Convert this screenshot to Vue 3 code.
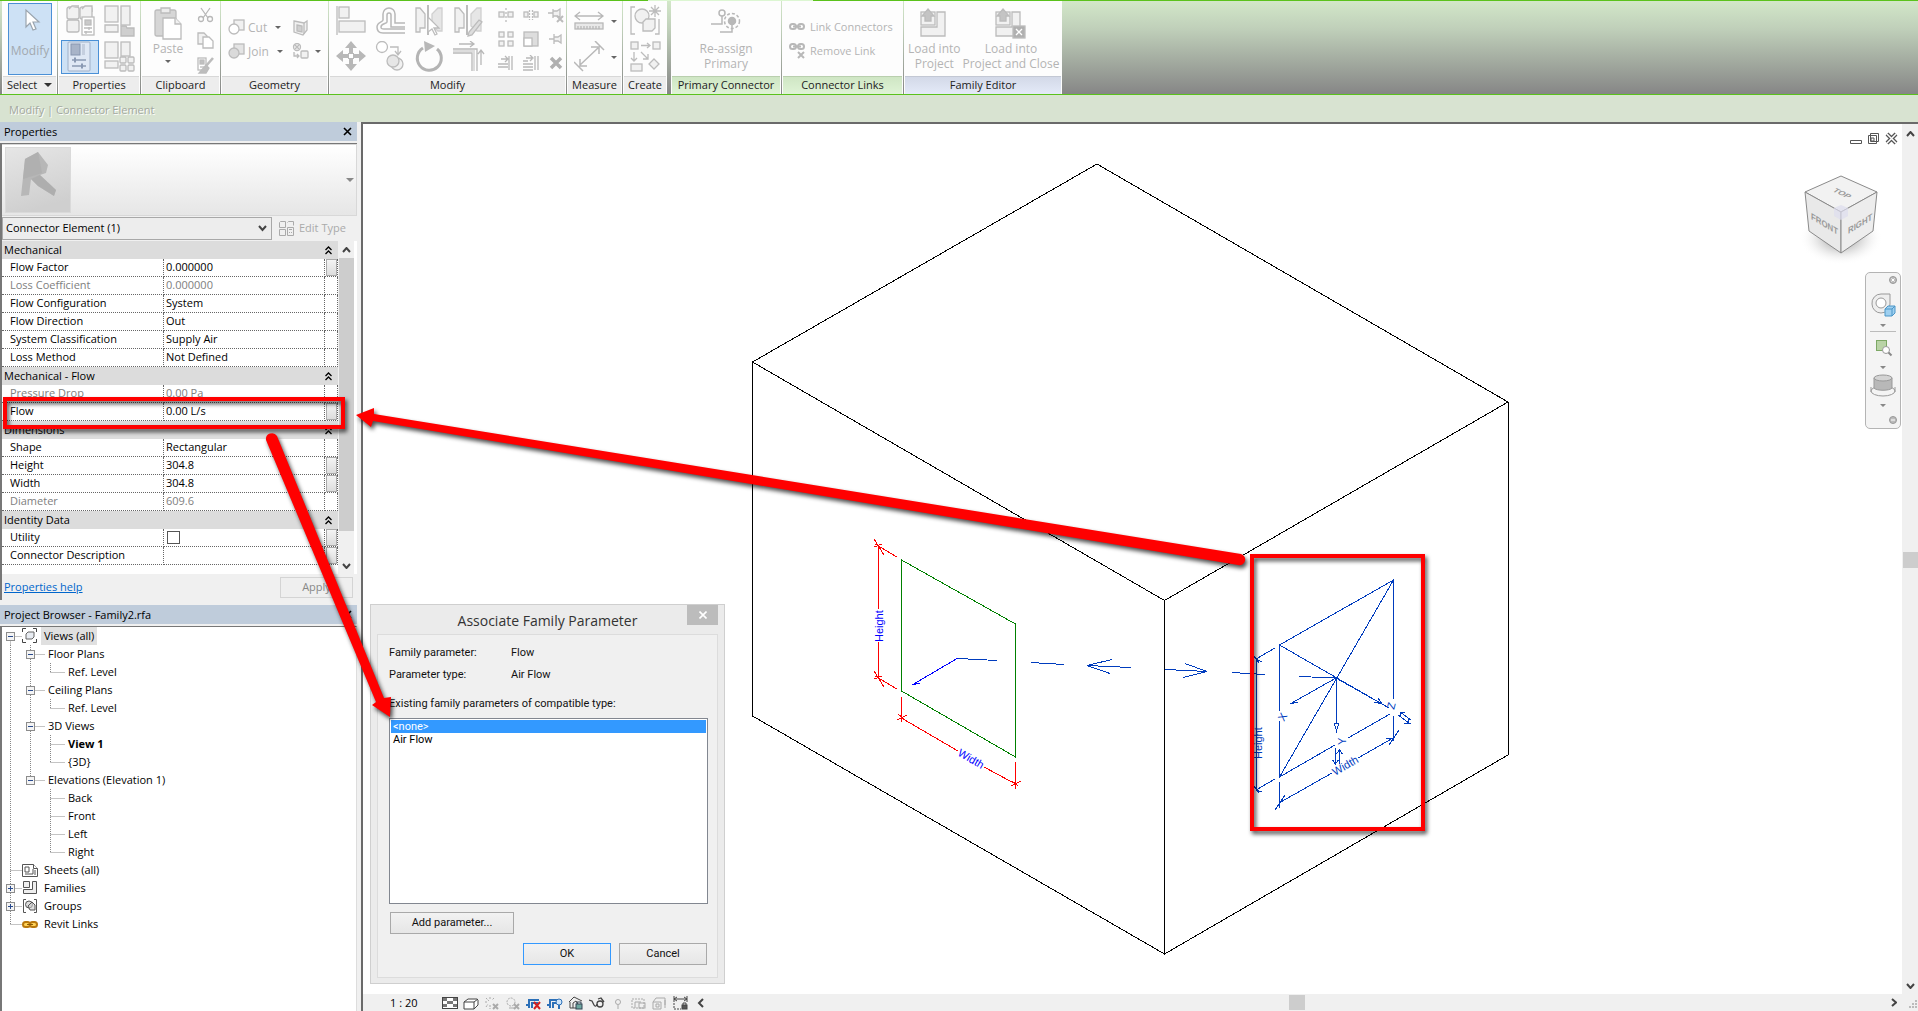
<script setup>
import { ref } from 'vue'

const G = 'fill="#f1f1f1" stroke="#bcbcbc" stroke-width="1.3"'
const L = 'fill="none" stroke="#b8b8b8" stroke-width="1.3"'
const D = 'fill="#b8b8b8"'

const icons = {
  cursor: `<path d="M9 3v17l4-4 3 7 3-1-3-7h6z" fill="#fff" stroke="#9aa4ae" stroke-width="1.2"/>`,
  typeProps: `<g ${G}><rect x="3" y="2" width="12" height="12" rx="2"/><rect x="16" y="2" width="12" height="12" rx="2"/><rect x="3" y="15" width="12" height="12" rx="2"/><path d="M5 4l3-3h7M18 4l3-3h7v6"/><rect x="18" y="12" width="12" height="18" fill="#fff"/><rect x="21" y="15" width="6" height="5" fill="#c9c9c9"/><path d="M20 23h8M20 27h8M25 22v3M22 26v3"/></g>`,
  family: `<g ${G}><rect x="2" y="1" width="13" height="16"/><rect x="18" y="1" width="9" height="19"/><path d="M2 20h13v7H2z"/><path d="M18 21h5l1 2h7v8H18z" fill="#cfcfcf"/></g>`,
  props: `<rect x="4" y="1" width="22" height="29" rx="1" fill="#dfe8f5" stroke="#9fb0c8"/><rect x="7" y="3" width="9" height="11" fill="#a8b4c8" stroke="#8796b0"/><rect x="18" y="3" width="3" height="11" fill="#c5cfdf"/><path d="M8 19h14M8 25h14" stroke="#8a99b3" stroke-width="1.5"/><path d="M11 16.500v5M18 22.500v5" stroke="#8a99b3" stroke-width="2"/>`,
  types: `<g ${G}><rect x="2" y="1" width="13" height="16"/><rect x="18" y="1" width="9" height="14"/><rect x="2" y="20" width="13" height="7"/><rect x="17" y="16" width="6" height="6" rx="1"/><rect x="25" y="16" width="6" height="6" rx="1"/><rect x="17" y="24" width="6" height="6" rx="1"/><rect x="25" y="24" width="6" height="6" rx="1"/></g>`,
  paste: `<g ${G}><rect x="3" y="4" width="21" height="26" rx="2" fill="#d6d6d6"/><path d="M9 2h9v5H9z" fill="#ececec"/><path d="M11 12h12l6 6v15H11z" fill="#fff"/><path d="M23 12v6h6"/></g>`,
  cut: `<g ${L}><path d="M4 1l7 10M13 1L6 11"/><circle cx="4" cy="12" r="2.500"/><circle cx="13" cy="12" r="2.500"/></g>`,
  copy: `<g ${G}><path d="M1 1h6l3 3v8H1z"/><path d="M6 5h6l4 4v7H6z" fill="#fff"/></g>`,
  match: `<g ${G}><rect x="1" y="1" width="8" height="12" fill="#fff"/><rect x="3" y="3" width="4" height="4" fill="#c0c0c0"/><path d="M3 10h4"/><path d="M16 1L9 9" stroke-width="2.500"/><path d="M9 8l3 3-3 5H2z" fill="#bdbdbd"/></g>`,
  cutGeo: `<g ${G}><rect x="6" y="1" width="10" height="10"/><circle cx="6" cy="10" r="5" fill="#fff"/></g>`,
  joinGeo: `<g ${G}><rect x="6" y="1" width="10" height="10" fill="#e4e4e4"/><circle cx="6" cy="10" r="5" fill="#dadada"/></g>`,
  wall: `<g ${G}><path d="M2 2l10 2 3-2v9l-4 5-9-3z"/><path d="M5 6l5 1v6l-5-1z" fill="#d0d0d0"/><path d="M12 4v11"/></g>`,
  demolish: `<g ${G}><circle cx="5" cy="4" r="3.500"/><path d="M3 2l4 4M7 2L3 6"/><rect x="9" y="8" width="7" height="7" rx="1"/><path d="M2 9v4h5M5 11l2 2-2 2"/></g>`,
  align: `<g ${G}><path d="M1 1v29"/><rect x="3" y="2" width="10" height="11"/><rect x="3" y="16" width="26" height="11"/></g>`,
  offset: `<g fill="none" stroke="#b8b8b8" stroke-width="1.5"><path d="M30 18H20V9a6 6 0 0 0-12 0v6c0 2-6 2-6 7s3 6 6 6h22"/><path d="M30 22H16V10a2 2 0 0 0-4 0v7c0 2-6 1-6 5 0 2 1 2 3 2h21"/></g>`,
  mirrorPick: `<g ${G}><path d="M14 0v30" stroke-width="2"/><path d="M2 3h4l5 6v14l-5 0v4H2z"/><path d="M28 3h-4l-6 6v12l6 5h4z" fill="#e6e6e6" stroke="#d0d0d0"/><path d="M14 12v15l4-3 3 6 2-1-3-6h5z" fill="#fff"/></g>`,
  mirrorDraw: `<g ${G}><path d="M14 0v30" stroke-width="2"/><path d="M2 3h4l5 6v14l-5 0v4H2z"/><path d="M28 3h-4l-6 6v12l6 5h4z" fill="#e6e6e6" stroke="#d0d0d0"/><path d="M26 15l3 2-10 13-4 1 1-4z" fill="#ddd"/></g>`,
  move: `<g ${D}><path d="M15 0l6 7h-4v5h-4V7H9zM15 30l6-7h-4v-5h-4v5H9zM0 15l7-6v4h5v4H7v4zM30 15l-7-6v4h-5v4h5v4z"/><rect x="12.500" y="12.500" width="5" height="5" fill="#fff" stroke="#b8b8b8"/></g>`,
  copyTool: `<g ${G}><circle cx="7" cy="6" r="5.500" fill="#fff"/><path d="M15 6h8v7M20 10l3 4 3-4" fill="none"/><circle cx="22" cy="23" r="6"/><circle cx="18" cy="20" r="6" fill="#e6e6e6"/></g>`,
  rotate: `<path d="M9 7a12 12 0 1 0 14 1" fill="none" stroke="#b4b4b4" stroke-width="3"/><path d="M10 0l11 5-10 6z" ${D}/>`,
  trim: `<g ${L}><path d="M6 3h14M17 0l4 3-4 3M0 8h24v22M0 12h19v18M28 24V10M25 13l3-4 3 4"/><path d="M0 10h21v20" stroke="#ddd" stroke-width="2"/></g>`,
  split: `<g ${G}><rect x="1" y="5" width="5" height="5"/><rect x="10" y="5" width="5" height="5"/><path d="M8 1v14" stroke-dasharray="2 2"/></g>`,
  splitGap: `<g ${G}><rect x="1" y="5" width="4" height="5"/><rect x="11" y="5" width="4" height="5"/><path d="M6.500 3v10M9.500 3v10" stroke-dasharray="2 1"/></g>`,
  unpin: `<g ${G}><path d="M0 6h5M5 2v9M5 4h4l3-2v8L9 9H5"/><path d="M9 9l6 6M15 9l-6 6" stroke-width="2"/></g>`,
  array: `<g ${G}><rect x="1" y="1" width="5" height="5"/><rect x="10" y="1" width="5" height="5"/><rect x="1" y="10" width="5" height="5"/><rect x="10" y="10" width="5" height="5"/></g>`,
  scale: `<g ${G}><rect x="1" y="1" width="14" height="14" fill="#ddd"/><rect x="1" y="7" width="8" height="8" fill="#fff"/></g>`,
  pin: `<g ${G}><path d="M1 8h5M6 3v10M6 6h4l3-2v8l-3-2H6"/></g>`,
  trimOne: `<g ${L}><path d="M3 4h6M7 1l3 3-3 3M0 9h10M0 12h10M11 1v14M14 1v14"/></g>`,
  trimMany: `<g ${L}><path d="M3 3h6M7 0l3 3-3 3M0 6h5M0 9h10M0 12h10M0 15h10M12 1v14M15 1v14"/></g>`,
  del: `<path d="M3 3l10 10M13 3L3 13" stroke="#b0b0b0" stroke-width="3.500"/>`,
  measure: `<g ${L}><path d="M1 6h28M6 2L1 6l5 4M24 2l5 4-5 4"/><rect x="1" y="13" width="28" height="6" fill="#e8e8e8"/><path d="M4 16v3M7 16v3M10 16v3M13 16v3M16 16v3M19 16v3M22 16v3M25 16v3"/></g>`,
  dimension: `<g fill="none" stroke="#b8b8b8" stroke-width="1.5"><path d="M6 24L24 7M6 18v7h7M17 6h8v7M21 0l9 9M0 21l9 9"/></g>`,
  group: `<g ${G}><path d="M5 2H1v27h4M25 29h4V14" fill="none"/><circle cx="12" cy="11" r="7"/><path d="M13 17l3-3h9v9l-3 3h-9z"/><path d="M25 0v12M19 6h12M21 2l8 8M29 2l-8 8"/></g>`,
  similar: `<g ${G}><rect x="1" y="1" width="7" height="7"/><rect x="23" y="1" width="7" height="7"/><path d="M11 4.500h9M17 2l3 2.500-3 2.500M4 11v8M1 17l3 3 3-3M11 11l7 7M18 13v5h-5" fill="none"/><rect x="1" y="23" width="11" height="7"/><path d="M24 18l5 5-5 5-5-5z"/></g>`,
  reassign: `<g fill="none" stroke="#b8b8b8" stroke-width="1.5"><circle cx="12" cy="4" r="3"/><path d="M12 7v8H1M22 13v10H10"/><circle cx="22" cy="12" r="7.500" stroke-dasharray="3 2"/><circle cx="22" cy="12" r="3.500" fill="#b8b8b8"/></g>`,
  link: `<g fill="none" stroke="#b8b8b8" stroke-width="2"><rect x="1" y="5" width="6" height="5" rx="2.500"/><rect x="9" y="5" width="6" height="5" rx="2.500"/><path d="M4 7.500h8"/></g>`,
  unlink: `<g fill="none" stroke="#b8b8b8" stroke-width="2"><rect x="1" y="1" width="6" height="5" rx="2.500"/><rect x="9" y="1" width="6" height="5" rx="2.500"/><path d="M4 3.500h8M9 9l6 6M15 9l-6 6"/></g>`,
  load: `<g ${G}><path d="M17 3h8v24H1V18h16z"/><rect x="1" y="3" width="14" height="13"/><path d="M8 0l6 7h-3v5H5V7H2z" fill="#c4c4c4"/></g>`,
  loadClose: `<g ${G}><path d="M17 3h8v24H1V18h16z"/><rect x="1" y="3" width="14" height="13"/><path d="M8 0l6 7h-3v5H5V7H2z" fill="#c4c4c4"/><rect x="18" y="17" width="12" height="12" fill="#b0b0b0"/><path d="M21 20l6 6M27 20l-6 6" stroke="#fff"/></g>`,
  views: `<g fill="none" stroke="#444"><path d="M4 .5H.5V4M11 .5h3.500V4M4 14.500H.5V11M11 14.500h3.500V11"/><path d="M4 6l2-2h6v5l-2 2H4z" fill="#e8ecf2" stroke="#666"/></g>`,
  sheets: `<g fill="#fff" stroke="#555"><path d="M.5 2.500h11l4 4v8H.5z"/><path d="M11.500 2.500v4h4" /><path d="M3 5h4v5H3zM3 12h8V7M13 8v5" fill="none"/></g>`,
  families: `<g fill="#eee" stroke="#555"><path d="M1.500 1.500h6v6h-6zM10.500 1.500h4v12h-13v-4h9z"/></g>`,
  groups: `<g fill="none" stroke="#555"><path d="M4 1.500H1.500v13H4M12 1.500h2.500v13H12"/><circle cx="7" cy="6.500" r="3.500" fill="#ddd"/><path d="M6 8l4-4 3 3v5H8z" fill="#ccc" fill-opacity=".6"/></g>`,
  revitLinks: `<g fill="none" stroke="#b9780c" stroke-width="2"><rect x="1" y="6" width="7" height="5" rx="2.500" fill="#ffd35a"/><rect x="8" y="6" width="7" height="5" rx="2.500" fill="#ffd35a"/><path d="M5 8.500h6" stroke="#8a5a08" stroke-width="1"/></g>`
}

const dark = 'fill="none" stroke="#444"'
const faint = 'fill="none" stroke="#aaa"'
const viewIcons = [
  ['Detail level', `<rect x=".5" y="1.500" width="15" height="11" fill="#fff" stroke="#444"/><path d="M1 2h4v3H1zM11 2h4v3h-4zM5 5h6v3H5zM1 8h4v3H1zM11 8h4v3h-4z" fill="#777"/>`],
  ['Visual style', `<path d="M1 6l4-3h9l1 1v5l-4 4H1zM1 6h10v7M11 6l4-3" fill="#fff" stroke="#444"/>`],
  ['Sun path', `<g ${faint}><path d="M6 1v3M1 6h3M2 2l3 3M10 2L8 4M2 11l2-3M6 9v4" stroke-dasharray="2 1"/><path d="M9 8l5 5M14 8l-5 5" stroke-width="2"/></g>`],
  ['Shadows', `<g ${faint}><circle cx="6" cy="6" r="4" stroke-dasharray="2 1"/><path d="M4 12h5"/><path d="M9 8l5 5M14 8l-5 5" stroke-width="2"/></g>`],
  ['Crop view', `<path d="M0 9h3V4h10M3 9v3M6 12V7h6" fill="none" stroke="#2c70b8" stroke-width="2"/><path d="M8 6l6 7M14 6l-6 7" stroke="#d42020" stroke-width="2"/>`],
  ['Show crop region', `<path d="M0 9h3V4h8M3 9v3M6 12V7h3" fill="none" stroke="#2c70b8" stroke-width="2"/><circle cx="12" cy="6" r="3" fill="#cfe6fb" stroke="#2c70b8"/><path d="M12 9v4" stroke="#2c70b8" stroke-width="2"/>`],
  ['Lock 3D view', `<path d="M1 6l5-5 8 4M2 6v6h6M5 12V7l3-2 2 3" ${dark}/><rect x="8" y="8" width="6" height="5" fill="#6fa8a0" stroke="#345"/><path d="M9 8V6h4v2" fill="none" stroke="#345"/>`],
  ['Temporary hide', `<g fill="none" stroke="#444" stroke-width="1.3"><path d="M0 4l3 1 2 4c1 2 3 1 3-1M9 3l3-1 3 4"/><circle cx="11" cy="8" r="3"/></g>`],
  ['Reveal hidden', `<g ${faint}><circle cx="8" cy="6" r="2.500"/><path d="M8 9v4"/></g>`],
  ['Worksharing', `<g ${faint}><path d="M1 3h12v9H1z" stroke-dasharray="2 1"/><path d="M4 12V6h6"/><rect x="8" y="7" width="6" height="5"/></g>`],
  ['Analytical model', `<g ${faint}><path d="M1 6l3-4h9v7M1 6h8v7H1zM4 8h3v3H4zM13 4v8"/></g>`],
  ['Reveal constraints', `<g ${dark}><path d="M1 0v6M14 0v6M1 3h13M4 1L1 3l3 2M11 1l3 2-3 2"/><path d="M1 7v6h7" stroke-dasharray="2 1"/><rect x="9" y="9" width="5" height="4" fill="#555"/><path d="M10 9V7h3v2"/></g>`],
  ['Collapse', `<path d="M9 3L5 7l4 4" fill="none" stroke="#444" stroke-width="2"/>`]
]

const groups = [
  { name: 'Mechanical', rows: [
    ['Flow Factor', '0.000000', { btn: true }],
    ['Loss Coefficient', '0.000000', { off: true }],
    ['Flow Configuration', 'System', {}],
    ['Flow Direction', 'Out', {}],
    ['System Classification', 'Supply Air', {}],
    ['Loss Method', 'Not Defined', {}]
  ] },
  { name: 'Mechanical - Flow', rows: [
    ['Pressure Drop', '0.00 Pa', { off: true }],
    ['Flow', '0.00 L/s', { btn: true }]
  ] },
  { name: 'Dimensions', rows: [
    ['Shape', 'Rectangular', {}],
    ['Height', '304.8', { btn: true }],
    ['Width', '304.8', { btn: true }],
    ['Diameter', '609.6', { off: true }]
  ] },
  { name: 'Identity Data', rows: [
    ['Utility', '', { btn: true, check: true }],
    ['Connector Description', '', { btn: true }]
  ] }
]

const tree = [
  { l: 0, t: 'Views (all)', box: '-', icon: 'views', sel: true },
  { l: 1, t: 'Floor Plans', box: '-' },
  { l: 2, t: 'Ref. Level', end: true },
  { l: 1, t: 'Ceiling Plans', box: '-' },
  { l: 2, t: 'Ref. Level', end: true },
  { l: 1, t: '3D Views', box: '-' },
  { l: 2, t: 'View 1', bold: true },
  { l: 2, t: '{3D}', end: true },
  { l: 1, t: 'Elevations (Elevation 1)', box: '-', end: true },
  { l: 2, t: 'Back' },
  { l: 2, t: 'Front' },
  { l: 2, t: 'Left' },
  { l: 2, t: 'Right', end: true },
  { l: 0, t: 'Sheets (all)', icon: 'sheets' },
  { l: 0, t: 'Families', box: '+', icon: 'families' },
  { l: 0, t: 'Groups', box: '+', icon: 'groups' },
  { l: 0, t: 'Revit Links', icon: 'revitLinks', end: true }
]
const lastBranch = tree.findIndex(r => r.l === 1 && r.end)
const guideWidth = [20, 43, 63]

function guides(row, i) {
  const v = (x, a, b) => `M${x} ${a}V${b}`
  const y = 9.5
  let d = v(8.5, i === 0 ? y : 0, row.l === 0 && row.end ? y : 18)
  if (i > 0 && i <= lastBranch) d += v(28.5, 0, i === lastBranch ? y : 18)
  if (row.l === 2) d += v(48.5, 0, row.end ? y : 18)
  return d + `M${8.5 + row.l * 20} ${y}H${[20, 43, 63][row.l]}`
}

const utility = ref(false)
const chosen = ref('none')
</script>

<template>
  <div class="app">
    <header class="ribbon">
      <section class="panel p-select">
        <div class="body">
          <button class="tool big on"><svg width="30" height="38" viewBox="-2 0 30 34" v-html="icons.cursor" />Modify</button>
        </div>
        <h2>Select <i class="tri dark" /></h2>
      </section>
      <section class="panel p-props">
        <div class="body quad">
          <button v-for="n in ['typeProps', 'family', 'props', 'types']" :key="n" class="tool" :class="{ on: n === 'props' }" :aria-label="n"><svg width="32" height="32" v-html="icons[n]" /></button>
        </div>
        <h2>Properties</h2>
      </section>
      <section class="panel p-clip">
        <div class="body clip">
          <button class="tool big"><svg width="32" height="38" viewBox="0 -3 32 38" v-html="icons.paste" />Paste<i class="tri" /></button>
          <div class="stack">
            <button v-for="n in ['cut', 'copy', 'match']" :key="n" class="tool" :aria-label="n"><svg width="17" height="17" v-html="icons[n]" /></button>
          </div>
        </div>
        <h2>Clipboard</h2>
      </section>
      <section class="panel p-geo">
        <div class="body geo">
          <div class="pair"><button class="tool"><svg width="17" height="17" v-html="icons.cutGeo" />Cut<i class="tri" /></button><button class="tool" aria-label="Wall joins"><svg width="17" height="17" v-html="icons.wall" /></button></div>
          <div class="pair"><button class="tool"><svg width="17" height="17" v-html="icons.joinGeo" />Join<i class="tri" /></button><button class="tool" aria-label="Demolish"><svg width="17" height="17" v-html="icons.demolish" /><i class="tri" /></button></div>
        </div>
        <h2>Geometry</h2>
      </section>
      <section class="panel p-mod">
        <div class="body mod">
          <div class="large">
            <button v-for="n in ['align', 'offset', 'mirrorPick', 'mirrorDraw', 'move', 'copyTool', 'rotate', 'trim']" :key="n" class="tool" :aria-label="n"><svg width="32" height="32" v-html="icons[n]" /></button>
          </div>
          <div class="small">
            <button v-for="n in ['split', 'splitGap', 'unpin', 'array', 'scale', 'pin', 'trimOne', 'trimMany', 'del']" :key="n" class="tool" :aria-label="n"><svg width="16" height="16" v-html="icons[n]" /></button>
          </div>
        </div>
        <h2>Modify</h2>
      </section>
      <section class="panel p-meas">
        <div class="body two">
          <button class="tool" aria-label="Measure"><svg width="31" height="32" viewBox="0 -5 31 32" v-html="icons.measure" /><i class="tri" /></button>
          <button class="tool" aria-label="Dimension"><svg width="31" height="32" v-html="icons.dimension" /><i class="tri" /></button>
        </div>
        <h2>Measure</h2>
      </section>
      <section class="panel p-create">
        <div class="body two">
          <button class="tool" aria-label="Create group"><svg width="31" height="32" v-html="icons.group" /></button>
          <button class="tool" aria-label="Create similar"><svg width="31" height="32" v-html="icons.similar" /></button>
        </div>
        <h2>Create</h2>
      </section>
      <section class="panel p-prim green">
        <div class="body"><button class="tool big"><svg width="32" height="38" viewBox="0 -6 32 38" v-html="icons.reassign" />Re-assign<br>Primary</button></div>
        <h2>Primary Connector</h2>
      </section>
      <section class="panel p-links green">
        <div class="body links">
          <button class="tool"><svg width="16" height="16" v-html="icons.link" />Link Connectors</button>
          <button class="tool"><svg width="16" height="16" v-html="icons.unlink" />Remove Link</button>
        </div>
        <h2>Connector Links</h2>
      </section>
      <section class="panel p-fam blue">
        <div class="body fam">
          <button class="tool big"><svg width="28" height="38" viewBox="0 -6 28 38" v-html="icons.load" />Load into<br>Project</button>
          <button class="tool big"><svg width="32" height="38" viewBox="0 -6 32 38" v-html="icons.loadClose" />Load into<br>Project and Close</button>
        </div>
        <h2>Family Editor</h2>
      </section>
    </header>

    <div class="options">Modify | Connector Element</div>

    <main class="work">
      <aside class="side">
        <section class="palette">
          <div class="caption">Properties
            <button class="x" aria-label="Close properties"><svg width="9" height="9"><path d="M1 1l7 7M8 1L1 8" stroke="#000" stroke-width="1.600" /></svg></button>
          </div>
          <div class="frame">
            <div class="type">
              <svg width="66" height="66" viewBox="0 0 66 66">
                <defs><linearGradient id="tg" x1="0" y1="0" x2="0.300" y2="1"><stop offset="0" stop-color="#e6e6e6" /><stop offset="1" stop-color="#cfcfcf" /></linearGradient></defs>
                <rect x=".5" y=".5" width="65" height="65" fill="url(#tg)" stroke="#dadada" />
                <path d="M20 12L33 5L43 18L41 26L35 28L51 43L49 49L33 39L26 32L24 48L16 49z" fill="#b7b7b7" />
                <path d="M20 12L33 5L37 26L18 32z" fill="#adadad" opacity=".7" />
                <path d="M35 28L51 43L49 49L33 39L26 32z" fill="#a8a8a8" opacity=".6" />
              </svg>
              <i class="tri" />
            </div>
            <div class="picker">
              <select aria-label="Element filter"><option>Connector Element (1)</option></select>
              <button class="edit"><svg width="17" height="17" fill="none" stroke="#aaa"><path d="M1.500 2.500l1-1h5v6h-6zM9.500 2.500l1-1h5v4M1.500 9.500h6v6h-6zM9.500 7.500h6v8h-6zM11 9.500h3M11 12.500h1M13 12.500h1" /></svg>Edit Type</button>
            </div>
            <div class="gridwrap">
              <table>
                <colgroup><col class="c1"><col><col class="c3"></colgroup>
                <tbody v-for="g in groups" :key="g.name">
                  <tr class="head"><th colspan="2" scope="rowgroup">{{ g.name }}</th><th><svg width="7" height="9" fill="none" stroke="#000" stroke-width="1.300"><path d="M.5 4l3-3 3 3M.5 8l3-3 3 3" /></svg></th></tr>
                  <tr v-for="r in g.rows" :key="r[0]" :class="{ off: r[2].off }">
                    <td>{{ r[0] }}</td>
                    <td><input v-if="r[2].check" v-model="utility" type="checkbox" aria-label="Utility"><template v-else>{{ r[1] }}</template></td>
                    <td><button v-if="r[2].btn" class="assoc" :aria-label="'Associate ' + r[0]" /></td>
                  </tr>
                </tbody>
              </table>
              <div class="vbar">
                <svg width="9" height="6"><path d="M1 5l3.500-4L8 5" fill="none" stroke="#444" stroke-width="2" /></svg>
                <div class="thumb" />
                <svg width="9" height="6"><path d="M1 1l3.500 4L8 1" fill="none" stroke="#444" stroke-width="2" /></svg>
              </div>
            </div>
            <div class="foot"><a href="#">Properties help</a><button disabled>Apply</button></div>
          </div>
        </section>
        <section class="palette browser">
          <div class="caption">Project Browser - Family2.rfa
            <button class="x" aria-label="Close browser"><svg width="9" height="9"><path d="M1 1l7 7M8 1L1 8" stroke="#000" stroke-width="1.600" /></svg></button>
          </div>
          <ul class="tree">
            <li v-for="(r, i) in tree" :key="i">
              <svg :width="guideWidth[r.l]" height="18">
                <path :d="guides(r, i)" stroke="#888" stroke-dasharray="1 1" fill="none" />
                <g v-if="r.box" :transform="`translate(${4 + r.l * 20} 5)`">
                  <rect x=".5" y=".5" width="8" height="8" fill="#f4f4f4" stroke="#8c8c8c" />
                  <path :d="r.box === '+' ? 'M2 4.500h5M4.500 2v5' : 'M2 4.500h5'" stroke="#2a4b8d" />
                </g>
              </svg>
              <svg v-if="r.icon" width="16" height="16" v-html="icons[r.icon]" />
              <span :class="{ sel: r.sel, bold: r.bold }">{{ r.t }}</span>
            </li>
          </ul>
        </section>
      </aside>

      <section class="view">
        <div class="canvas">
          <svg class="drawing" width="1539" height="871" viewBox="363 123 1539 871">
            <g shape-rendering="crispEdges" fill="none">
              <path stroke="#000" d="M1097 163L752.500 361V715L1164.500 953L1508 754V401zM752.500 361L1164.500 599.500L1508 401M1164.500 599.500V953" />
              <path stroke="#008000" d="M901.500 559L1015.500 623V756L901.500 690z" />
              <path stroke="#f00" d="M878.500 546V608M878.500 641V678M874 538l10 16M875 543l22 13M874 546l8-3M874 670l10 16M875 675l22 13M874 678l8-3M901.500 696v25M897 719l10-5M898 713l6 5M901.500 717L958 750M984 766L1015.500 783M1015.500 761v27M1011 785l10-5M1012 780l6 5" />
              <path stroke="#00f" d="M912 684L958 657M912 684l8-2" />
              <g stroke="#003cbe">
                <path d="M958 657.500L997 659.500M1031 661.500L1064 663.500M1131 666.500L1087 664.500L1112 658.500M1087 664.500L1110 672.500M1165 668.500L1207 670.500L1185 662.500M1207 670.500L1183 676.500M1232 671.500L1265 673.500M1299 675.500L1336 677" />
                <path d="M1279.500 710V644L1393.500 579V698M1393.500 715V740M1393.500 579L1279.500 776V720M1279.500 644L1389 707M1336 677L1382 703L1374 701M1382 703L1378 697M1279.500 776L1335 744M1348 737L1390 713M1279.500 781V807M1336 677L1290 703L1298 701M1336.500 677V722M1334 722h5l-2.500 8z" />
                <path d="M1256.500 658V789M1256 658L1275 647M1256 658l6 3M1254 655l5 7M1256 789L1275 778M1256 789l6 2M1254 785l5 7M1279 802L1332 772M1358 757L1393 737M1275 809l10-15M1279 802v-7M1389 744l10-15M1393 737l-7 1" />
                <path d="M1335.500 747V763l-3-4M1335.500 763l3-4M1339.500 763V749l-3 4M1339.500 749l3 4M1398 714l11 8l-5 0M1409 722l-1-4M1411 719l-11-8l5 0M1400 711l1 4" />
              </g>
            </g>
            <g class="dim">
              <text transform="translate(883 641) rotate(-90)" fill="#00f">Height</text>
              <text transform="translate(957 754) rotate(30)" fill="#00f">Width</text>
              <text transform="translate(1262 758) rotate(-90)" fill="#003cbe">Height</text>
              <text transform="translate(1335 775) rotate(-30)" fill="#003cbe">Width</text>
              <text transform="translate(1284 721) rotate(-60)" fill="#003cbe">X</text>
              <text transform="translate(1346 744) rotate(-90)" fill="#003cbe">Y</text>
              <text transform="translate(1394 709) rotate(-75)" fill="#003cbe">Z</text>
            </g>
          </svg>

          <div class="winbtns">
            <button aria-label="Minimize"><svg width="13" height="13"><path d="M1.500 8.500h11v3h-11z" fill="#fff" stroke="#555" /></svg></button>
            <button aria-label="Restore"><svg width="13" height="13"><path d="M3.500 1.500h8v8h-8zM1.500 3.500h8v8h-8z" fill="#fff" stroke="#555" /><path d="M4 6h3v3H4z" fill="none" stroke="#555" /></svg></button>
            <button aria-label="Close view"><svg width="13" height="13"><path d="M2 2l9 9M11 2l-9 9" stroke="#555" stroke-width="4" /><path d="M2 2l9 9M11 2l-9 9" stroke="#fff" stroke-width="1.500" /></svg></button>
          </div>

          <svg class="cube" width="90" height="100" viewBox="0 0 90 100">
            <defs><radialGradient id="sh"><stop offset="0" stop-color="#777" /><stop offset="1" stop-color="#fff" stop-opacity="0" /></radialGradient></defs>
            <ellipse cx="45" cy="67" rx="42" ry="27" fill="url(#sh)" />
            <g stroke="#8a8a8a" stroke-linejoin="round"><path d="M45 5L81 21L45 41L9 21z" fill="#f2f2f2" /><path d="M9 21L45 41V82L13 60z" fill="#e9e9e9" /><path d="M81 21L45 41V82L77 60z" fill="#ededed" /></g>
            <path d="M45 34l7 3v8l-7 4-7-4v-8z" fill="#dde" opacity=".7" />
            <g class="face"><text transform="matrix(.87 .42 -.7 .5 36 20)">TOP</text><text transform="matrix(.87 .52 0 1 15 48)">FRONT</text><text transform="matrix(.87 -.52 0 1 52 63)">RIGHT</text></g>
          </svg>

          <div class="navbar">
            <svg width="34" height="155" viewBox="0 0 34 155">
              <g stroke="#999" fill="#eee"><circle cx="27" cy="7" r="3.500" fill="#bbb" /><path d="M25.500 5.500l3 3M28.500 5.500l-3 3" stroke="#fff" /><circle cx="27" cy="147" r="3.500" fill="#bbb" /><path d="M25 147h4" stroke="#fff" /><path d="M6 31a9 9 0 0 1 9-10h9v10a9 9 0 0 1-18 0z" /><circle cx="15" cy="30" r="5" fill="#fff" /></g>
              <path d="M19 36l3-3h7v7l-3 3h-7z" fill="#9fd0f0" stroke="#4a96c8" /><path d="M19 36h7v7M26 36l3-3" fill="none" stroke="#4a96c8" />
              <path d="M14 51h6l-3 3zM14 93h6l-3 3zM14 131h6l-3 3z" fill="#888" />
              <path d="M4 58.500h26" stroke="#bbb" />
              <rect x="10.500" y="67.500" width="10" height="10" fill="#b9d3a6" stroke="#7da865" />
              <circle cx="20" cy="77" r="3.500" fill="#fff" stroke="#999" /><path d="M22.500 79.500l3 3" stroke="#888" stroke-width="2" />
              <ellipse cx="17" cy="118" rx="12" ry="5" fill="#f4f4f4" stroke="#999" /><path d="M5 114v5M29 114v5" stroke="#999" />
              <path d="M8 105v10c2 3 16 3 18 0v-10z" fill="#b8b8b8" stroke="#999" /><ellipse cx="17" cy="105" rx="9" ry="3" fill="#d4d4d4" stroke="#999" />
            </svg>
          </div>

          <form class="dialog" role="dialog" aria-labelledby="dt" @submit.prevent>
            <div class="dtitle"><h3 id="dt">Associate Family Parameter</h3><button type="button" class="dclose" aria-label="Close"><svg width="8" height="8"><path d="M.5.5l7 7M7.500.5l-7 7" stroke="#fff" stroke-width="1.600" /></svg></button></div>
            <div class="dbody">
              <dl><dt>Family parameter:</dt><dd>Flow</dd><dt>Parameter type:</dt><dd>Air Flow</dd></dl>
              <label for="params">Existing family parameters of compatible type:</label>
              <select id="params" v-model="chosen" size="10"><option value="none">&lt;none&gt;</option><option value="air">Air Flow</option></select>
              <button type="button" class="add">Add parameter...</button>
              <div class="actions"><button type="submit" class="ok">OK</button><button type="button">Cancel</button></div>
            </div>
          </form>
        </div>
        <div class="vscroll">
          <svg width="9" height="6"><path d="M1 5l3.500-4L8 5" fill="none" stroke="#444" stroke-width="2" /></svg>
          <div class="thumb" />
          <svg width="9" height="6"><path d="M1 1l3.500 4L8 1" fill="none" stroke="#444" stroke-width="2" /></svg>
        </div>
        <footer class="viewbar">
          <span class="scale">1 : 20</span>
          <button v-for="v in viewIcons" :key="v[0]" :aria-label="v[0]"><svg width="16" height="14" v-html="v[1]" /></button>
          <div class="hscroll"><div class="thumb" /><svg width="6" height="9"><path d="M1 1l4 3.500L1 8" fill="none" stroke="#444" stroke-width="2" /></svg></div>
          <svg class="grip" width="12" height="12" fill="#bbb"><path d="M9 3h2v2H9zM6 6h2v2H6zM9 6h2v2H9zM3 9h2v2H3zM6 9h2v2H6zM9 9h2v2H9z" /></svg>
        </footer>
      </section>
    </main>

    <svg class="marks" aria-hidden="true">
      <g fill="#f00">
        <path d="M1238 565L373 421L371 427L356 415L374 408L374 414L1241 554A5 5 0 0 1 1238 565z" />
        <path d="M266 440L376 702L372 705L390 717L391 697L384 698L277 436A6 6 0 0 0 266 440z" />
      </g>
      <g fill="none" stroke="#f00" stroke-width="4"><rect x="5" y="399" width="338" height="28" /><rect x="1252" y="556" width="171" height="273" /></g>
    </svg>
  </div>
</template>

<style>
body { margin: 0; overflow: hidden; }
</style>

<style scoped>
.app { position: relative; height: 100vh; display: flex; flex-direction: column; overflow: hidden; background: #f0f0f0; font: 11px/16px "Open Sans", "Noto Sans", sans-serif; color: #000; }
.app * { box-sizing: border-box; }
button { font: inherit; color: inherit; border: 0; padding: 0; background: none; }
svg { display: block; flex: none; }
.tri { display: inline-block; border: 3px solid transparent; border-top: 3px solid #666; border-bottom: 0; }
.tri.dark { border-width: 4px 4px 0; border-top-color: #333; margin-left: 4px; vertical-align: 2px; }

.ribbon { flex: none; display: flex; gap: 1px; height: 95px; padding: 1px 0 0 2px; border-bottom: 1px solid #5bc21c; background: linear-gradient(to right, #5bc21c 648px, #dcf6d2 648px 813px, #5bc21c 813px) 0 0 / 100% 1px no-repeat, linear-gradient(#d3e8c9, #c0d0ba 30%, #868686); }
.panel { flex: none; display: flex; flex-direction: column; background: #fdfdfd; }
.panel .body { flex: 1; min-height: 0; }
.panel h2 { flex: none; margin: 0 1px; height: 18px; font: inherit; text-align: center; white-space: nowrap; color: #222; background: #ededed; border-top: 1px solid #d8d8d8; }
.panel.green h2 { background: linear-gradient(#cfe6c4, #dff3d6); border-color: #b9cfae; }
.panel.blue h2 { background: linear-gradient(#d3d9e8, #e4eaf8); border-color: #c3c8d4; }
.p-select { width: 55px; }
.p-props { width: 82px; }
.p-clip { width: 79px; }
.p-geo { width: 107px; }
.p-mod { width: 237px; }
.p-meas { width: 55px; }
.p-create { width: 44px; margin-right: 3px; }
.p-prim { width: 110px; }
.p-links { width: 121px; }
.p-fam { width: 158px; }
.tool { display: flex; align-items: center; color: #b4b4b4; font-size: 12px; white-space: nowrap; border: 1px solid transparent; }
.tool.big { flex-direction: column; line-height: 15px; padding-top: 1px; }
.tool.on { background: #cde1f5; border-color: #4a90d6; color: #a2a9af; }
.p-select .body { padding: 2px 5px 1px 6px; }
.p-select .tool { width: 44px; height: 72px; }
.p-prim .body { display: flex; justify-content: center; }
.quad { display: grid; grid-template-columns: 38px 38px; grid-template-rows: 34px 34px; column-gap: 1px; row-gap: 2px; padding: 3px 0 0 3px; }
.quad .tool { justify-content: center; }
.clip { display: flex; padding-left: 10px; gap: 11px; }
.clip .tri { margin-top: 4px; }
.stack { display: flex; flex-direction: column; padding-top: 5px; gap: 6px; }
.geo { display: flex; flex-direction: column; gap: 5px; padding: 17px 0 0 6px; }
.pair { display: flex; align-items: center; }
.pair .tool:first-child { width: 64px; gap: 3px; }
.pair .tool:last-child { gap: 6px; }
.pair .tool:first-child .tri { margin-left: 5px; }
.mod { display: flex; gap: 6px; padding-left: 6px; }
.large { display: grid; grid-template-columns: repeat(4, 39px); grid-template-rows: 34px 34px; row-gap: 2px; padding-top: 3px; }
.small { display: grid; grid-template-columns: repeat(3, 25px); grid-template-rows: repeat(3, 24px); padding-top: 5px; align-items: start; }
.two { display: flex; flex-direction: column; gap: 2px; padding: 3px 0 0 6px; }
.two .tri { margin-left: 6px; }
.p-meas .tool { height: 34px; }
.links { display: flex; flex-direction: column; gap: 6px; padding: 17px 0 0 6px; }
.links .tool { gap: 5px; font-size: 11px; }
.fam { display: flex; padding: 0 3px; justify-content: space-between; }

.options { flex: none; height: 27px; line-height: 30px; padding-left: 9px; color: #a3a8a0; text-shadow: 1px 1px #fff; background: #d8e3d1; }

.work { flex: 1; min-height: 0; display: flex; }
.side { flex: none; width: 357px; display: flex; flex-direction: column; }
.palette { flex: none; }
.caption { display: flex; justify-content: space-between; align-items: center; height: 19px; padding: 0 5px 0 4px; background: #bfccdb; }
.frame { margin-top: 2px; border: solid #777; border-width: 1px 0 0 2px; }
.type { display: flex; align-items: center; justify-content: space-between; height: 72px; padding: 0 2px 0 3px; background: linear-gradient(#fff, #e6e6e6); border: 1px solid #d8d8d8; border-left: 0; }
.type .tri { border-width: 4px 4px 0; border-top-color: #888; }
.picker { display: flex; align-items: center; gap: 6px; height: 25px; padding-bottom: 1px; }
.picker select { width: 270px; height: 23px; font: inherit; line-height: 16px; padding: 0 3px; border: 1px solid #a8a8a8; border-radius: 0; appearance: none; color: #000; background: #ededed url("data:image/svg+xml,%3Csvg xmlns='http://www.w3.org/2000/svg' width='9' height='7'%3E%3Cpath d='M1 1l3.500 4L8 1' fill='none' stroke='%23444' stroke-width='2'/%3E%3C/svg%3E") no-repeat right 4px center; }
.edit { display: flex; align-items: center; gap: 4px; color: #aaa; white-space: nowrap; }
.gridwrap { display: flex; background: #fff; height: 333px; }
table { width: 336px; flex: none; align-self: flex-start; table-layout: fixed; border-collapse: separate; border-spacing: 0; }
.c1 { width: 162px; }
.c3 { width: 13px; }
td, th { height: 18px; padding: 0; font-weight: normal; text-align: left; line-height: 16px; white-space: nowrap; vertical-align: top; }
td { border: 0 dotted #666; border-width: 0 1px 1px 0; padding-left: 2px; }
td:first-child { padding-left: 8px; }
td:last-child { padding-left: 1px; }
th { background: #dcdcdc; line-height: 18px; padding-left: 2px; }
th:last-child { padding-left: 0; vertical-align: middle; }
.off td { color: #808080; }
td input { display: block; appearance: none; width: 13px; height: 13px; margin: 2px 0 0 1px; border: 1px solid #555; background: #fff; }
.assoc { display: block; width: 11px; height: 17px; border: 1px solid #aaa; background: linear-gradient(#f4f4f4, #ddd); }
.vbar { display: flex; flex-direction: column; align-items: center; width: 16px; padding: 6px 0 5px; background: #f0f0f0; height: 333px; }
.vbar .thumb { width: 15px; height: 273px; margin: 5px 0 auto; background: #cdcdcd; }
.foot { display: flex; align-items: center; justify-content: space-between; height: 26px; padding: 0 4px 0 2px; }
.foot a { color: #0066cc; }
.foot button { width: 73px; height: 21px; color: #888; border: 1px solid #d4d4d4; background: #efefef; }
.browser { flex: 1; margin-top: 5px; display: flex; flex-direction: column; min-height: 0; }
.tree { flex: 1; margin: 2px 0 0; padding: 0; list-style: none; background: #fff; border: solid #777; border-width: 1px 1px 0 2px; border-right-color: #ddd; }
.tree li { display: flex; align-items: center; height: 18px; white-space: nowrap; }
.tree span { padding: 1px 3px; }
.tree svg + svg { margin-right: 3px; }
.sel { background: #e0e0e0; }
.bold { font-weight: bold; }

.view { flex: 1; min-width: 0; margin-left: 4px; display: grid; grid-template-columns: 1fr 16px; grid-template-rows: 1fr 17px; border: solid #6a6a6a; border-width: 2px 0 0 2px; }
.canvas { position: relative; min-width: 0; min-height: 0; overflow: hidden; background: #fff; }
.drawing { position: absolute; left: 0; top: 0; }
.dim { font: 11px "Liberation Sans", Arial, sans-serif; }
.winbtns { position: absolute; right: 4px; top: 8px; display: flex; gap: 5px; }
.cube { position: absolute; right: 16px; top: 47px; }
.face { font: bold 9px "Liberation Sans", Arial, sans-serif; fill: #999; }
.navbar { position: absolute; right: 1px; top: 148px; width: 36px; height: 157px; background: #f4f4f4; border: 1px solid #b4b4b4; border-radius: 5px; }
.vscroll { display: flex; flex-direction: column; align-items: center; justify-content: space-between; padding: 7px 0 5px; background: #f0f0f0; }
.vscroll .thumb { width: 15px; height: 16px; background: #cdcdcd; }
.viewbar { grid-column: 1 / 3; display: flex; align-items: center; padding-left: 27px; background: #f0f0f0; }
.scale { width: 52px; }
.viewbar button { width: 21px; }
.hscroll { flex: 1; display: flex; align-items: center; justify-content: flex-end; height: 15px; margin-right: 9px; }
.hscroll .thumb { width: 16px; height: 15px; background: #cdcdcd; margin: 0 auto; }
.hscroll svg { margin-left: 12px; }

.dialog { position: absolute; left: 7px; bottom: 10px; width: 355px; height: 380px; display: flex; flex-direction: column; padding: 0 6px 6px; background: #ebebeb; border: 1px solid #cfcfcf; color: #111; font-family: Roboto, "Open Sans", sans-serif; }
.dtitle { display: flex; height: 29px; flex: none; align-items: flex-start; font-family: "Open Sans", sans-serif; }
.dtitle h3 { flex: 1; margin: 0 -31px 0 0; font-weight: normal; font-size: 14px; line-height: 31px; text-align: center; color: #333; }
.dclose { width: 31px; height: 20px; background: #bcbcbc; display: flex; align-items: center; justify-content: center; }
.dbody { flex: 1; display: flex; flex-direction: column; padding: 10px 10px 12px 11px; background: #f0f0f0; border: 1px solid #dcdcdc; }
dl { display: grid; grid-template-columns: 122px 1fr; row-gap: 6px; margin: 0 0 13px; }
dd { margin: 0; }
.dbody label { margin-bottom: 6px; }
#params { height: 186px; margin-right: -1px; font: inherit; padding: 1px; border: 1px solid #828790; border-radius: 0; background: #fff; color: #000; outline: 0; overflow: hidden; }
#params option { padding: 0 2px; line-height: 13px; min-height: 13px; height: 13px; }
#params option:checked { background: #39f linear-gradient(#39f, #39f); -webkit-text-fill-color: #fff; }
.dbody button { height: 22px; border: 1px solid #a9a9a9; background: linear-gradient(#f2f2f2, #e6e6e6); }
.add { width: 124px; margin: 8px 0 9px 1px; }
.actions { display: flex; justify-content: flex-end; gap: 8px; }
.actions button { width: 88px; }
.dbody .ok { border-color: #39f; }

.marks { position: absolute; left: 0; top: 0; width: 100%; height: 100%; pointer-events: none; filter: drop-shadow(2px 3px 2px rgba(0, 0, 0, 0.7)); }
</style>
